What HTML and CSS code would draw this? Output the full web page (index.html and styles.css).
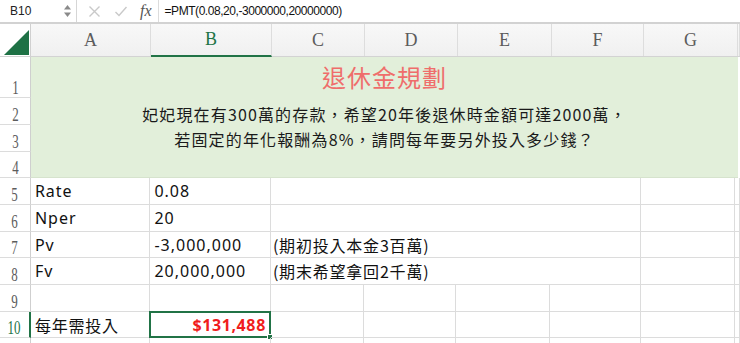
FILE: index.html
```html
<!DOCTYPE html>
<html>
<head>
    <title>退休金規劃</title>
    <link rel="stylesheet" href="styles.css">
</head>
<body>
    <div class="toolbar">
        <div class="namebox">
            <span class="cellname">B10</span>
            <svg class="spin" width="9" height="14" viewBox="0 0 9 14">
                <polygon points="4.5,1 8,5.5 1,5.5" fill="#8a8a8a"/>
                <polygon points="1,8.5 8,8.5 4.5,13" fill="#8a8a8a"/>
            </svg>
        </div>
        <div class="fbtns">
            <svg class="fbtn" width="13" height="13" viewBox="0 0 13 13">
                <path d="M1.5 1.5 L11.5 11.5 M11.5 1.5 L1.5 11.5" stroke="#c9c9c9" stroke-width="1.4" fill="none"/>
            </svg>
            <svg class="fbtn" width="14" height="13" viewBox="0 0 14 13">
                <path d="M1.5 7 L5 10.5 L12.5 2" stroke="#c9c9c9" stroke-width="1.4" fill="none"/>
            </svg>
            <span class="fx">fx</span>
        </div>
        <div class="formula">=PMT(0.08,20,-3000000,20000000)</div>
    </div>

    <div class="sheet">
        <!-- column headers -->
        <div class="row head-row">
            <div class="corner">
                <svg width="31" height="33" viewBox="0 0 31 33">
                    <polygon points="29,6 29,31 4,31" fill="#1e7145"/>
                </svg>
            </div>
            <div class="ch col-a">A</div>
            <div class="ch col-b selected">B</div>
            <div class="ch col-c">C</div>
            <div class="ch col-d">D</div>
            <div class="ch col-e">E</div>
            <div class="ch col-f">F</div>
            <div class="ch col-g">G</div>
            <div class="ch col-rest"></div>
        </div>

        <!-- rows 1-4: merged title block -->
        <div class="block">
            <div class="rh-stack">
                <div class="rh r1"><span>1</span></div>
                <div class="rh r2"><span>2</span></div>
                <div class="rh r3"><span>3</span></div>
                <div class="rh r4"><span>4</span></div>
            </div>
            <div class="banner">
                <div class="banner-title">退休金規劃</div>
                <div class="banner-line first">妃妃現在有300萬的存款，希望20年後退休時金額可達2000萬，</div>
                <div class="banner-line">若固定的年化報酬為8%，請問每年要另外投入多少錢？</div>
            </div>
            <div class="col-rest tall"></div>
        </div>

        <div class="row data">
            <div class="rh"><span>5</span></div>
            <div class="cell col-a">Rate</div>
            <div class="cell col-b">0.08</div>
            <div class="cell col-cf"></div>
            <div class="cell col-g"></div>
            <div class="cell col-rest"></div>
        </div>
        <div class="row data">
            <div class="rh"><span>6</span></div>
            <div class="cell col-a">Nper</div>
            <div class="cell col-b">20</div>
            <div class="cell col-cf"></div>
            <div class="cell col-g"></div>
            <div class="cell col-rest"></div>
        </div>
        <div class="row data short">
            <div class="rh"><span>7</span></div>
            <div class="cell col-a">Pv</div>
            <div class="cell col-b">-3,000,000</div>
            <div class="cell col-cf note">(期初投入本金3百萬)</div>
            <div class="cell col-g"></div>
            <div class="cell col-rest"></div>
        </div>
        <div class="row data">
            <div class="rh"><span>8</span></div>
            <div class="cell col-a">Fv</div>
            <div class="cell col-b">20,000,000</div>
            <div class="cell col-cf note">(期末希望拿回2千萬)</div>
            <div class="cell col-g"></div>
            <div class="cell col-rest"></div>
        </div>
        <div class="row data">
            <div class="rh"><span>9</span></div>
            <div class="cell col-a"></div>
            <div class="cell col-b"></div>
            <div class="cell col-c"></div>
            <div class="cell col-d"></div>
            <div class="cell col-e"></div>
            <div class="cell col-f"></div>
            <div class="cell col-g"></div>
            <div class="cell col-rest"></div>
        </div>
        <div class="row data short">
            <div class="rh active"><span>10</span></div>
            <div class="cell col-a cjk">每年需投入</div>
            <div class="cell col-b result">
                $131,488
                <div class="handle"></div>
            </div>
            <div class="cell col-c"></div>
            <div class="cell col-d"></div>
            <div class="cell col-e"></div>
            <div class="cell col-f"></div>
            <div class="cell col-g"></div>
            <div class="cell col-rest"></div>
        </div>
        <div class="row data last">
            <div class="rh"></div>
            <div class="cell col-a"></div>
            <div class="cell col-b"></div>
            <div class="cell col-c"></div>
            <div class="cell col-d"></div>
            <div class="cell col-e"></div>
            <div class="cell col-f"></div>
            <div class="cell col-g"></div>
            <div class="cell col-rest"></div>
        </div>
    </div>
</body>
</html>
```

FILE: styles.css
```css
* {
    box-sizing: border-box;
}

body {
    margin: 0;
    width: 740px;
    height: 343px;
    overflow: hidden;
    background: #ffffff;
    font-family: "Noto Sans", "Noto Sans CJK TC", sans-serif;
}

/* formula bar */

.toolbar {
    display: flex;
    align-items: center;
    height: 24px;
    border-bottom: 2px solid #d2d2d2;
}

.namebox {
    display: flex;
    align-items: center;
    justify-content: space-between;
    width: 77px;
    height: 22px;
    padding: 0 4px 0 10px;
    border-right: 1px solid #d6d6d6;
}

.cellname {
    font-family: "Liberation Sans", Arial, sans-serif;
    font-size: 12px;
    color: #222;
}

.fbtns {
    display: flex;
    align-items: center;
    height: 22px;
    padding-left: 11px;
    padding-right: 6px;
    border-right: 1px solid #dcdcdc;
}

.fbtn {
    margin-right: 13px;
}

.fx {
    font-family: "Liberation Serif", serif;
    font-style: italic;
    font-size: 16px;
    color: #555;
    margin-left: -1px;
}

.formula {
    padding-left: 6px;
    font-family: "Liberation Sans", Arial, sans-serif;
    font-size: 12px;
    letter-spacing: -0.45px;
    color: #111;
}

/* sheet grid */

.row {
    display: flex;
}

.col-a { width: 120px; }
.col-b { width: 121px; }
.col-c { width: 93px; }
.col-d { width: 93px; }
.col-e { width: 94px; }
.col-f { width: 92px; }
.col-g { width: 94px; }
.col-cf { width: 372px; }
.col-rest { width: 2px; }

.head-row {
    height: 33px;
    background: linear-gradient(#f8f8f8, #f0f0f0);
    border-bottom: 1px solid #d3d3d3;
}

.corner {
    width: 31px;
    height: 32px;
    background: #ffffff;
    border-right: 1px solid #d0d0d0;
}

.corner svg {
    display: block;
}

.ch {
    display: flex;
    align-items: center;
    justify-content: center;
    border-right: 1px solid #dddddd;
    font-family: "Liberation Serif", serif;
    font-size: 18px;
    color: #5c5c5c;
}

.ch.selected {
    color: #217346;
    border-bottom: 2px solid #217346;
    margin-bottom: -1px;
}

.rh {
    width: 31px;
    display: flex;
    align-items: flex-end;
    justify-content: center;
    padding-bottom: 1px;
    border-right: 1px solid #cfcfcf;
    border-bottom: 1px solid #dcdcdc;
    font-family: "Liberation Serif", serif;
    font-size: 18px;
    line-height: 16px;
    color: #5c5c5c;
}

.rh span {
    display: inline-block;
    transform: scaleX(0.72);
}

.rh.active {
    color: #217346;
    border-right: 2px solid #217346;
}

/* merged title block, rows 1-4 */

.block {
    display: flex;
    height: 121px;
}

.rh-stack {
    display: flex;
    flex-direction: column;
}

.rh.r1 { height: 41px; }
.rh.r2 { height: 27px; }
.rh.r3 { height: 27px; }
.rh.r4 { height: 26px; }

.banner {
    width: 707px;
    background: #e2efda;
    border-bottom: 1px solid #d6e3cd;
    text-align: center;
    font-family: "Noto Sans CJK TC", sans-serif;
    color: #1a1a1a;
}

.banner-title {
    height: 40px;
    line-height: 40px;
    font-size: 24px;
    letter-spacing: 1px;
    color: #ef6d6b;
}

.banner-line {
    height: 25px;
    line-height: 25px;
    font-size: 16px;
    letter-spacing: 1.15px;
}

.banner-line.first {
    margin-top: 5px;
}

.tall {
    height: 121px;
}

/* data rows */

.data {
    height: 27px;
}

.data.short {
    height: 26px;
}

.data.last {
    height: 20px;
}

.cell {
    position: relative;
    display: flex;
    align-items: center;
    padding-left: 4px;
    border-right: 1px solid #dcdcdc;
    border-bottom: 1px solid #dcdcdc;
    font-size: 16px;
    letter-spacing: 1px;
    color: #111;
}

.note,
.cjk {
    font-family: "Noto Sans CJK TC", sans-serif;
    letter-spacing: 0.8px;
    padding-left: 2px;
}

.cjk {
    padding-left: 4px;
}

.result {
    justify-content: flex-end;
    padding-right: 3px;
    margin-left: -1px;
    width: 122px;
    margin-top: -1px;
    height: 27px;
    border: 2px solid #217346;
    color: #f01d1d;
    font-weight: bold;
    letter-spacing: 0.6px;
}

.handle {
    position: absolute;
    right: -4px;
    bottom: -4px;
    width: 6px;
    height: 6px;
    background: #217346;
    border: 1px solid #ffffff;
}
```
